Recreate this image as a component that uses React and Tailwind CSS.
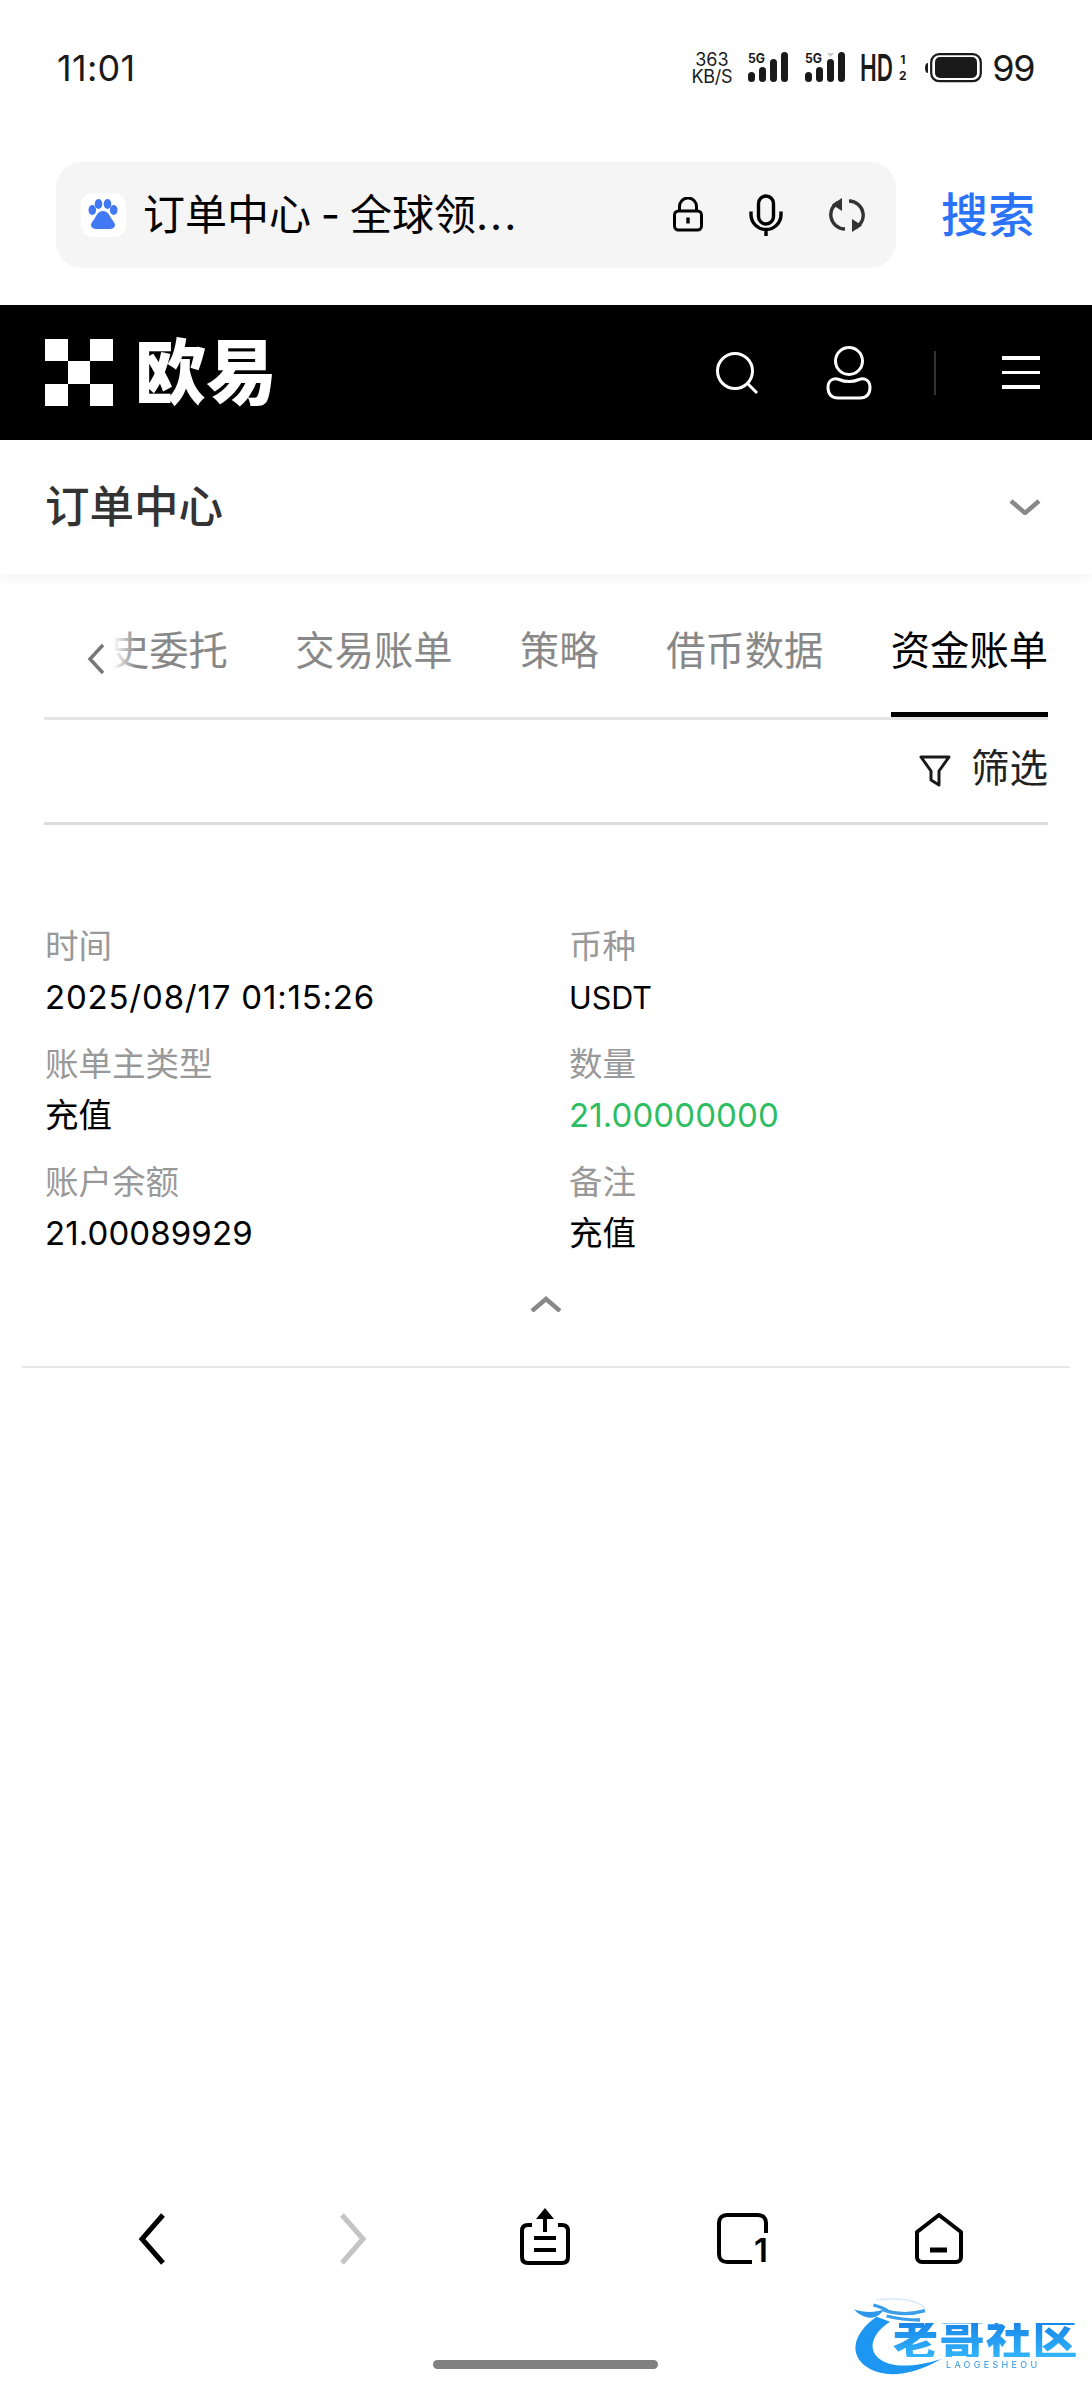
import React from 'react'

// signal strength bars with a small network label on top
const Signal = ({ muted }) => (
  <svg width="40" height="32" viewBox="0 0 40 32" fill="#1a1a1a" className="shrink-0">
    <text x="0" y="11" fontSize="12.5" fontWeight="700" fontFamily="Inter, sans-serif" textLength="17" lengthAdjust="spacingAndGlyphs">5G</text>
    <rect x="0" y="20" width="7" height="10" rx="3.5" />
    <rect x="11" y="15" width="7" height="15" rx="3.5" />
    <rect x="22" y="7" width="7" height="23" rx="3.5" />
    <rect x="33" y="0" width="7" height="30" rx="3.5" />
    {muted && <path d="M22 1h7l-3.5 4z" fill="#c8c8c8" />}
  </svg>
)

const StatusBar = () => (
  <div className="h-[162px] shrink-0 pb-[26px] pl-[57px] pr-[58px] flex items-center justify-between text-[#1a1a1a]">
    <span className="text-[36px] leading-none tracking-[0.3px]">11:01</span>
    <div className="flex items-center">
      <div className="w-[41px] flex flex-col items-center text-[18px] leading-[17px]">
        <span>363</span>
        <span className="tracking-[-0.3px]">KB/S</span>
      </div>
      <div className="ml-[16px] flex"><Signal /></div>
      <div className="ml-[17px] flex"><Signal muted /></div>
      <div className="ml-[15px] flex items-center shrink-0">
        <svg width="35" height="30" viewBox="0 0 35 30" fill="#1a1a1a" className="overflow-visible">
          <text x="0" y="28" fontSize="37" fontWeight="600" fontFamily="Inter, sans-serif" textLength="33" lengthAdjust="spacingAndGlyphs">HD</text>
        </svg>
        <div className="ml-[3px] w-[9px] h-[28px] flex flex-col items-center justify-between text-[12px] leading-[12px] font-bold">
          <span>1</span>
          <span>2</span>
        </div>
      </div>
      <svg width="57" height="30" viewBox="0 0 57 30" className="ml-[18px] shrink-0">
        <path d="M0 15c0-3 1-5 3-5v10c-2 0-3-2-3-5z" fill="#1a1a1a" />
        <rect x="6.2" y="1.2" width="49.6" height="27" rx="8" fill="none" stroke="#1a1a1a" strokeWidth="2.2" />
        <rect x="10" y="4" width="42" height="21" rx="5" fill="#1a1a1a" />
      </svg>
      <span className="ml-[10px] text-[36px] leading-none tracking-[-1.5px]">99</span>
    </div>
  </div>
)

const AddressBar = () => (
  <div className="h-[143px] shrink-0 px-[56px] flex items-start">
    <div className="w-[840px] h-[106px] bg-[#f5f5f5] rounded-[26px] flex items-center pl-[25px]">
      <div className="w-[45px] h-[44px] rounded-[12px] bg-white flex items-center justify-center shrink-0">
        <svg width="45" height="44" viewBox="0 0 45 44" fill="#4178f4">
          <ellipse cx="11.3" cy="17" rx="3.8" ry="5" />
          <ellipse cx="17.5" cy="11" rx="3.8" ry="5" />
          <ellipse cx="26.5" cy="11" rx="3.8" ry="5" />
          <ellipse cx="32.7" cy="17" rx="3.8" ry="5" />
          <path d="M22 18c4 0 6 3 8 7 2 3 4 5 4 7 0 3-3 4-6 4H16c-3 0-6-1-6-4 0-2 2-4 4-7 2-4 4-7 8-7z" />
        </svg>
      </div>
      <span className="ml-[17px] w-[530px] text-[42px] leading-none text-black whitespace-nowrap [word-spacing:-2px] shrink-0">
        订单中心 - 全球领<span className="tracking-[2px]">...</span>
      </span>
      <svg width="30" height="36" viewBox="0 0 30 36" fill="none" stroke="#000" strokeWidth="3" className="shrink-0">
        <path d="M6.5 14V9.5a8.5 8.5 0 0 1 17 0V14" />
        <rect x="1.5" y="14" width="27" height="19" rx="4" />
        <path d="M15 20.5v6" strokeWidth="3.4" />
      </svg>
      <svg width="34" height="42" viewBox="0 0 34 42" fill="none" stroke="#000" strokeWidth="3.4" className="ml-[46px] shrink-0">
        <rect x="9.5" y="2" width="15" height="28" rx="7.5" />
        <path d="M2 17.500v3a15 15 0 0 0 30 0v-3M17 35v7" />
      </svg>
      <svg width="38" height="36" viewBox="0 0 38 36" fill="none" className="ml-[45px] shrink-0">
        <path d="M10 5.500C4.500 9 2 13.500 3 20c1 6.500 7 12 14 12" stroke="#333" strokeWidth="3.4" />
        <path d="M28 30.500c5.500-3.500 8-8 7-14.500C34 9.500 28 4 21 4" stroke="#333" strokeWidth="3.4" />
        <path d="M14 1v13L4 7.500z" fill="#333" />
        <path d="M24 35V22l10 6.500z" fill="#333" />
      </svg>
    </div>
    <span className="ml-[45px] mt-[30px] text-[47px] leading-[46px] font-medium text-[#2a72f6] whitespace-nowrap">搜索</span>
  </div>
)

const LogoMark = () => (
  <div className="grid grid-cols-3 grid-rows-3 w-[68px] h-[68px] shrink-0">
    <div className="bg-white" />
    <div />
    <div className="bg-white" />
    <div />
    <div className="bg-white" />
    <div />
    <div className="bg-white" />
    <div />
    <div className="bg-white" />
  </div>
)

const TopNav = () => (
  <div className="h-[135px] shrink-0 bg-black flex items-center pl-[45px]">
    <LogoMark />
    <span className="ml-[22px] w-[142px] text-[71px] leading-none font-black text-white whitespace-nowrap shrink-0">欧易</span>
    <svg width="46" height="44" viewBox="0 0 46 44" fill="none" stroke="#fff" strokeWidth="3" className="ml-[438px] shrink-0">
      <circle cx="20" cy="20" r="17.500" />
      <path d="M32 32l10 10" />
    </svg>
    <svg width="46" height="54" viewBox="0 0 46 54" fill="none" stroke="#fff" strokeWidth="3" className="ml-[65px] shrink-0">
      <circle cx="23" cy="15" r="13.500" />
      <path d="M13 33.500c6 2.500 14 2.500 20 0 6-2 11 1 11 8 0 7-4 10.500-10 10.500H12C6 52 2 48.500 2 41.500c0-7 5-10 11-8z" />
    </svg>
    <div className="ml-[62px] w-[2px] h-[44px] bg-[#333333]" />
    <div className="ml-[66px] w-[38px] flex flex-col gap-[11px]">
      <div className="h-[3.500px] bg-white" />
      <div className="h-[3.500px] bg-white" />
      <div className="h-[3.500px] bg-white" />
    </div>
  </div>
)

const tabs = ['历史委托', '交易账单', '策略', '借币数据']

const Tabs = () => (
  <div className="relative h-[146px] shrink-0 mx-[44px] border-b-[3px] border-[#e4e4e4] flex justify-end gap-[67.500px] overflow-hidden">
    {tabs.map(t => (
      <div key={t} className="pt-[51px] text-[39.300px] leading-[52px] text-[#888888] whitespace-nowrap shrink-0">{t}</div>
    ))}
    <div className="h-[143px] pt-[51px] text-[39.300px] leading-[52px] text-black border-b-[5px] border-black whitespace-nowrap shrink-0">资金账单</div>
    {/* scroll-back arrow sits over a fade on the clipped tab */}
    <div className="absolute left-0 top-[30px] h-[110px] w-[92px] bg-linear-to-r from-white from-75% to-transparent" />
    <svg width="22" height="32" viewBox="0 0 22 32" fill="none" stroke="#777" strokeWidth="3.500" className="absolute left-[41px] top-[69px]">
      <path d="M18 2L5 16l13 14" />
    </svg>
  </div>
)

const FilterRow = () => (
  <div className="h-[105px] shrink-0 mx-[44px] pb-[6px] border-b-[3px] border-[#dddddd] flex items-center justify-end">
    <svg width="32" height="34" viewBox="0 0 32 34" fill="none" stroke="#1a1a1a" strokeWidth="3" strokeLinejoin="round" className="mt-[5px] shrink-0">
      <path d="M2 3h28L20 17v14l-8-5v-9z" />
    </svg>
    <span className="ml-[20px] text-[38.500px] leading-none text-[#222222]">筛选</span>
  </div>
)

const rows = [
  { label: '时间', value: '2025/08/17 01:15:26', cls: 'text-[33px] text-black tracking-[0.8px]' },
  { label: '币种', value: 'USDT', cls: 'text-[30.500px] text-black' },
  { label: '账单主类型', value: '充值', cls: 'text-[33.500px] text-black' },
  { label: '数量', value: '21.00000000', cls: 'text-[33px] text-[#2dbd63] tracking-[0.1px]' },
  { label: '账户余额', value: '21.00089929', cls: 'text-[33px] text-black tracking-[0.1px]' },
  { label: '备注', value: '充值', cls: 'text-[33.500px] text-black' },
]

const BillDetail = () => (
  <div className="mx-[22px] h-[543px] shrink-0 border-b-[2px] border-[#e8e8e8] pt-[96px]">
    <div className="grid grid-cols-[524px_1fr] pl-[23px] gap-y-[16px]">
      {rows.map(r => (
        <div key={r.label}>
          <div className="text-[33.500px] leading-[51px] text-[#999999]">{r.label}</div>
          <div className={`leading-[51px] ${r.cls}`}>{r.value}</div>
        </div>
      ))}
    </div>
    <div className="flex justify-center mt-[37px]">
      <svg width="32" height="16" viewBox="0 0 32 16" fill="none" stroke="#888" strokeWidth="4.500">
        <path d="M2 15L16 3l14 12" />
      </svg>
    </div>
  </div>
)

const BottomNav = () => (
  <div className="mt-auto h-[192px] shrink-0 flex items-start pl-[138px]">
    <svg width="28" height="52" viewBox="0 0 28 52" fill="none" stroke="#000" strokeWidth="5" className="mt-[5px] shrink-0">
      <path d="M25 2L4 26l21 24" />
    </svg>
    <svg width="28" height="52" viewBox="0 0 28 52" fill="none" stroke="#c4c4c4" strokeWidth="5" className="ml-[173px] mt-[5px] shrink-0">
      <path d="M3 2l21 24L3 50" />
    </svg>
    <svg width="50" height="57" viewBox="0 0 50 57" fill="none" stroke="#000" strokeWidth="4" className="ml-[153px] shrink-0">
      <path d="M12 17H8c-4 0-6 2-6 6v26c0 4 2 6 6 6h34c4 0 6-2 6-6V23c0-4-2-6-6-6h-4" />
      <path d="M25 8v16" />
      <path d="M16 11L25 0l9 11z" fill="#000" stroke="none" />
      <path d="M14 30h22M14 42h22" />
    </svg>
    <svg width="52" height="52" viewBox="0 0 52 52" fill="none" stroke="#000" strokeWidth="4" className="ml-[147px] mt-[5px] shrink-0 overflow-visible">
      <path d="M49 20V10c0-5-3-8-8-8H10c-5 0-8 3-8 8v31c0 5 3 8 8 8h25" />
      <text x="51" y="49" textAnchor="end" fontSize="33" fontWeight="600" fill="#000" stroke="none" fontFamily="Inter, sans-serif">1</text>
    </svg>
    <svg width="50" height="52" viewBox="0 0 50 52" fill="none" stroke="#000" strokeWidth="4" className="ml-[145px] mt-[5px] shrink-0">
      <path d="M25 2L3 19v25c0 3 2 5 5 5h34c3 0 5-2 5-5V19z" strokeLinejoin="round" />
      <path d="M16 37h17" strokeWidth="5" />
    </svg>
  </div>
)

// site badge laid over the lower right corner
const Badge = () => (
  <div className="absolute left-[840px] top-[2290px] w-[252px] h-[110px] blur-[0.6px]">
    <svg width="252" height="110" viewBox="0 0 756 330" fill="none" className="absolute inset-0">
      <path d="M110 80C45 125 25 185 72 225c50 40 135 38 232-18-90 28-155 26-190 -4-32-28-16-75 36-108z" fill="#1c96f0" />
      <path d="M42 58c30 10 60 12 90 0-10 15-20 25-40 25-20 0-40-12-50-25z" fill="#2f98ea" />
      <path d="M130 60c35 12 80 15 125 2M140 78c30 8 60 12 100 12M100 45c20 5 35 10 45 20" stroke="#3a9fe8" strokeWidth="10" />
      <path d="M110 30c60-8 120-2 145 25" stroke="#d8ebfa" strokeWidth="5" />
    </svg>
    <span className="absolute left-[53px] top-[33px] text-[45px] leading-[34px] font-black tracking-[1.500px] whitespace-nowrap bg-linear-to-b from-[#1a86e8] to-[#33b4fb] bg-clip-text text-transparent">老哥社区</span>
    <span className="absolute left-[106px] top-[71px] text-[9px] leading-[8px] tracking-[3.300px] text-[#2f93e6] whitespace-nowrap">LAOGESHEOU</span>
  </div>
)

export default function App() {
  return (
    <div className="relative w-[1092px] h-[2400px] bg-white flex flex-col overflow-hidden font-['Inter','Noto_Sans_CJK_SC',sans-serif]">
      <StatusBar />
      <AddressBar />
      <TopNav />
      <div className="h-[134px] shrink-0 pl-[45px] pr-[51px] bg-white flex items-center justify-between shadow-[0_4px_12px_rgba(0,0,0,0.05)] relative">
        <span className="text-[44.500px] leading-none font-medium text-[#333333]">订单中心</span>
        <svg width="32" height="16" viewBox="0 0 32 16" fill="none" stroke="#888" strokeWidth="4.500">
          <path d="M2 2l14 12L30 2" />
        </svg>
      </div>
      <Tabs />
      <FilterRow />
      <BillDetail />
      <BottomNav />
      <div className="absolute left-[433px] top-[2360px] w-[225px] h-[9px] rounded-full bg-[#808080]" />
      <Badge />
    </div>
  )
}
